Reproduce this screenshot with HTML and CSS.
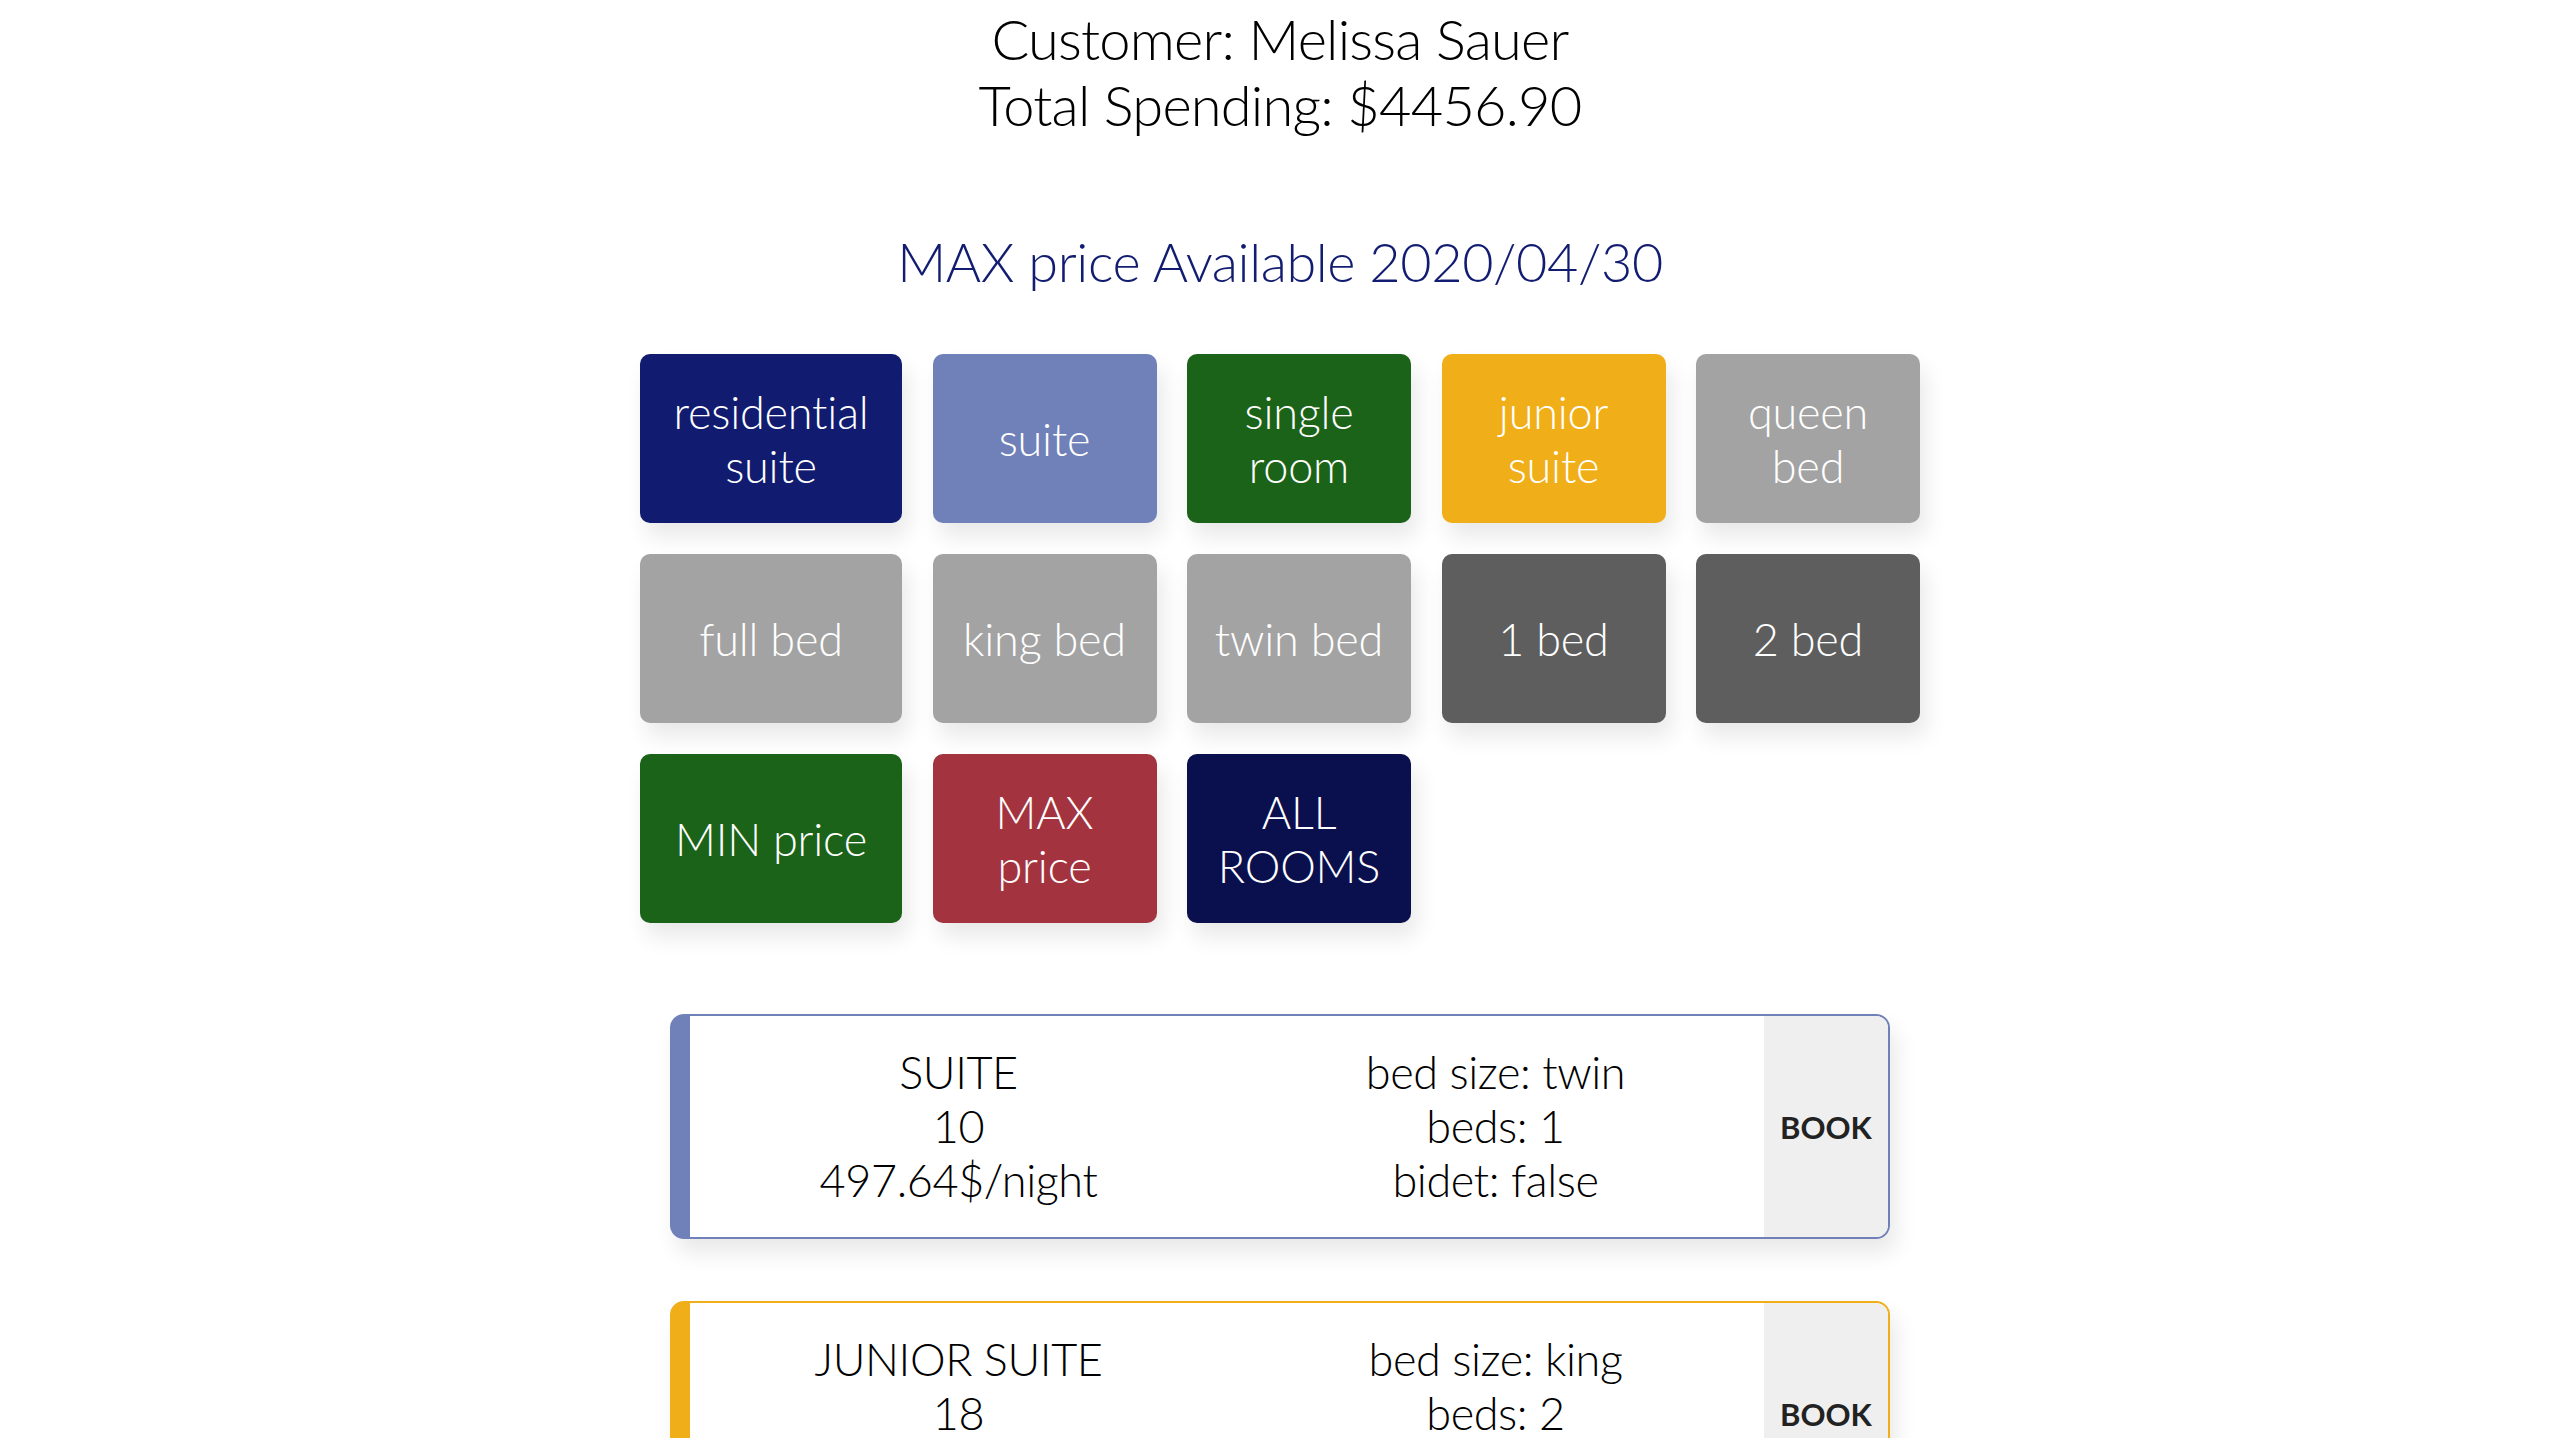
FILE: index.html
```html
<!DOCTYPE html>
<html lang="en">
<head>
<meta charset="utf-8">
<title>Rooms</title>
<link rel="stylesheet" href="styles.css">
</head>
<body>
<header class="customer">
  <div class="customer-line">Customer: Melissa Sauer</div>
  <div class="customer-line">Total Spending: $4456.90</div>
</header>
<h2 class="avail-title">MAX price Available 2020/04/30</h2>
<section class="filters">
  <button class="filter f-residential">residential suite</button>
  <button class="filter f-suite">suite</button>
  <button class="filter f-single">single room</button>
  <button class="filter f-junior">junior suite</button>
  <button class="filter f-light">queen bed</button>
  <button class="filter f-light">full bed</button>
  <button class="filter f-light">king bed</button>
  <button class="filter f-light">twin bed</button>
  <button class="filter f-dark">1 bed</button>
  <button class="filter f-dark">2 bed</button>
  <button class="filter f-single">MIN price</button>
  <button class="filter f-max">MAX price</button>
  <button class="filter f-all">ALL ROOMS</button>
</section>
<section class="rooms">
  <article class="room room-suite">
    <div class="room-info">
      <div class="room-col">SUITE<br>10<br>497.64$/night</div>
      <div class="room-col">bed size: twin<br>beds: 1<br>bidet: false</div>
    </div>
    <div class="room-book">BOOK</div>
  </article>
  <article class="room room-junior">
    <div class="room-info">
      <div class="room-col">JUNIOR SUITE<br>18<br>612.30$/night</div>
      <div class="room-col">bed size: king<br>beds: 2<br>bidet: true</div>
    </div>
    <div class="room-book">BOOK</div>
  </article>
</section>
</body>
</html>
```

FILE: styles.css
```css
html, body {
  margin: 0;
  padding: 0;
  background: #ffffff;
}
body {
  font-family: "Lato", "Liberation Sans", sans-serif;
  font-weight: 300;
  color: #000;
}
.customer {
  padding-top: 6px;
  text-align: center;
  font-size: 56px;
  line-height: 66px;
  letter-spacing: -0.8px;
}
.avail-title {
  margin: 91px 0 0;
  text-align: center;
  font-size: 54px;
  line-height: 65px;
  font-weight: 300;
  letter-spacing: -0.4px;
  color: #121d72;
}
.filters {
  width: 1280px;
  margin: 60px auto 0;
  display: grid;
  grid-template-columns: 262px repeat(4, 1fr);
  column-gap: 30.5px;
  row-gap: 31px;
}
.filter {
  height: 169px;
  border: none;
  border-radius: 10px;
  padding: 0 20px;
  font-family: "Lato", "Liberation Sans", sans-serif;
  font-weight: 300;
  font-size: 45px;
  line-height: 54px;
  letter-spacing: -0.2px;
  color: #fff;
  box-shadow: 6px 14px 22px rgba(0, 0, 0, 0.09);
  cursor: pointer;
}
.f-residential { background: #111c70; }
.f-suite { background: #7080b9; }
.f-single { background: #1b6319; }
.f-junior { background: #f0ae18; }
.f-light { background: #a3a3a3; }
.f-dark { background: #5e5e5e; }
.f-max { background: #a3343f; }
.f-all { background: #0a104d; }

.rooms {
  width: 1220px;
  margin: 91px auto 0;
  display: flex;
  flex-direction: column;
  gap: 62px;
}
.room {
  display: flex;
  border: 2px solid #7080b9;
  border-left-width: 20px;
  border-radius: 14px;
  overflow: hidden;
  background: #fff;
  box-shadow: 6px 14px 22px rgba(0, 0, 0, 0.09);
}
.room-suite { border-color: #7080b9; }
.room-junior { border-color: #f0ae18; }
.room-info {
  flex: 1;
  display: grid;
  grid-template-columns: 1fr 1fr;
  align-items: center;
  padding: 29px 0 30px;
}
.room-col {
  text-align: center;
  font-size: 45px;
  line-height: 54px;
  letter-spacing: -0.4px;
}
.room-book {
  width: 124px;
  background: #efefef;
  display: flex;
  align-items: center;
  justify-content: center;
  font-weight: 700;
  font-size: 31px;
  color: #222;
}
```
